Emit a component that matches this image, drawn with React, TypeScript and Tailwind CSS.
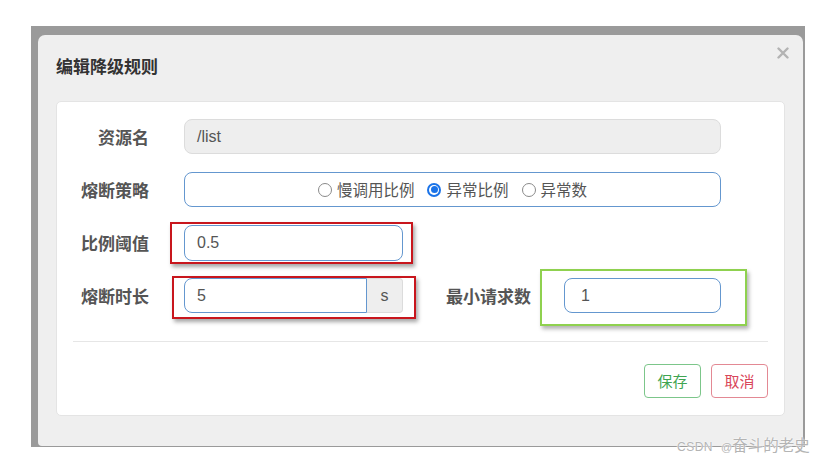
import { useState } from "react";

const cjk = "font-['Microsoft_YaHei','Noto_Sans_CJK_SC',sans-serif]";

function Radio({ checked }: { checked: boolean }) {
  if (checked) {
    return (
      <span className="w-[14px] h-[14px] rounded-full bg-[#1a73e8] flex items-center justify-center shrink-0">
        <span className="w-[10px] h-[10px] rounded-full bg-white flex items-center justify-center">
          <span className="w-[7px] h-[7px] rounded-full bg-[#1a73e8]" />
        </span>
      </span>
    );
  }
  return <span className="w-[14px] h-[14px] rounded-full border border-[#8a8a8a] bg-white shrink-0" />;
}

export default function App() {
  const [strategy, setStrategy] = useState(1);
  const options = ["慢调用比例", "异常比例", "异常数"];

  return (
    <div className={`w-[821px] h-[461px] bg-white relative overflow-hidden pt-[26px] pl-[31px] ${cjk}`}>
      {/* grey frame */}
      <div className="w-[774px] h-[421px] bg-[#9a9a9a] pt-[9px] pl-[7px] pr-[2px] pb-[1px]">
        <div className="h-full bg-[#efefef] rounded-t-[7px] rounded-b-[4px] relative">
          {/* header */}
          <div className="h-[66px] pt-[20px] pl-[18px]">
            <h4 className="text-[17px] leading-[22px] font-bold text-[#333]">编辑降级规则</h4>
          </div>
          <svg className="absolute right-[14px] top-[12px] w-[12px] h-[12px]" viewBox="0 0 12 12">
            <path d="M1.5 1.5 L10.5 10.5 M10.5 1.5 L1.5 10.5" stroke="#b3b3b3" strokeWidth="2.4" strokeLinecap="round" />
          </svg>

          {/* body panel */}
          <div className="mx-[18px] h-[315px] bg-white border border-[#e4e4e4] rounded-[5px] pt-[17px]">
            {/* 资源名 */}
            <div className="flex items-center h-[35px] mb-[18px]">
              <label className="w-[92px] text-right text-[17px] font-bold text-[#555]">资源名</label>
              <div className="ml-[35px] w-[537px] h-[35px] bg-[#eeeeee] border border-[#dcdcdc] rounded-[8px] flex items-center pl-[12px] text-[16px] text-[#555] font-['Liberation_Sans',sans-serif]">
                /list
              </div>
            </div>

            {/* 熔断策略 */}
            <div className="flex items-center h-[35px] mb-[18px]">
              <label className="w-[92px] text-right text-[17px] font-bold text-[#555]">熔断策略</label>
              <div className="ml-[35px] w-[537px] h-[35px] border border-[#6497cf] rounded-[8px] flex items-center justify-center gap-[13px] text-[15.5px] text-[#555]">
                {options.map((o, i) => (
                  <button key={o} onClick={() => setStrategy(i)} className="flex items-center gap-[5px] cursor-pointer">
                    <Radio checked={strategy === i} />
                    <span>{o}</span>
                  </button>
                ))}
              </div>
            </div>

            {/* 比例阈值 */}
            <div className="flex items-center h-[36px] mb-[17px]">
              <label className="w-[92px] text-right text-[17px] font-bold text-[#555]">比例阈值</label>
              <div className="ml-[35px] relative">
                <div className="absolute -left-[14px] -right-[10px] -top-[3px] -bottom-[3px] border-2 border-[#c8161d] shadow-[2px_3px_4px_rgba(0,0,0,0.35)]" />
                <div className="relative w-[219px] h-[36px] border border-[#6497cf] rounded-[8px] bg-white flex items-center pl-[12px] text-[16px] text-[#555] font-['Liberation_Sans',sans-serif]">
                  0.5
                </div>
              </div>
            </div>

            {/* 熔断时长 / 最小请求数 */}
            <div className="flex items-center h-[35px]">
              <label className="w-[92px] text-right text-[17px] font-bold text-[#555]">熔断时长</label>
              <div className="ml-[35px] relative">
                <div className="absolute -left-[12px] -right-[13px] -top-[2px] -bottom-[6px] border-2 border-[#c8161d] shadow-[2px_3px_4px_rgba(0,0,0,0.35)]" />
                <div className="relative flex w-[219px] h-[35px] bg-white font-['Liberation_Sans',sans-serif] text-[16px] text-[#555]">
                  <div className="w-[183px] h-full border border-[#6497cf] rounded-l-[8px] flex items-center pl-[12px]">5</div>
                  <div className="w-[36px] h-full bg-[#eeeeee] border border-l-0 border-[#dcdcdc] rounded-r-[4px] flex items-center justify-center">s</div>
                </div>
              </div>

              <label className="ml-[43px] w-[87px] text-[17px] font-bold text-[#555] whitespace-nowrap">最小请求数</label>
              <div className="ml-[31px] relative">
                <div className="absolute -left-[24px] -right-[26px] -top-[9px] -bottom-[13px] border-2 border-[#8fd14f] shadow-[2px_3px_4px_rgba(0,0,0,0.3)]" />
                <div className="relative w-[157px] h-[35px] border border-[#6497cf] rounded-[8px] bg-white flex items-center pl-[16px] text-[16px] text-[#555] font-['Liberation_Sans',sans-serif]">
                  1
                </div>
              </div>
            </div>

            <div className="mx-[16px] mt-[28px] h-px bg-[#e6e6e6]" />

            <div className="flex justify-end gap-[10px] mt-[22px] mr-[16px]">
              <button className="w-[57px] h-[34px] border border-[#7cc68a] rounded-[4px] text-[15px] text-[#3fa552]">保存</button>
              <button className="w-[57px] h-[34px] border border-[#e38994] rounded-[4px] text-[15px] text-[#d9465a]">取消</button>
            </div>
          </div>
        </div>
      </div>

      {/* watermark */}
      <div className="absolute left-[677px] top-[433px] flex items-baseline whitespace-nowrap text-[#b4b4b4] [text-shadow:0_0_2px_#fff,0_0_1px_#fff]">
        <span className="text-[12px] tracking-[0.5px] font-['Liberation_Sans',sans-serif]">CSDN</span>
        <span className="ml-[8px] text-[11px] font-['Liberation_Sans',sans-serif]">@</span>
        <span className="text-[15.5px]">奋斗的老史</span>
      </div>
    </div>
  );
}
